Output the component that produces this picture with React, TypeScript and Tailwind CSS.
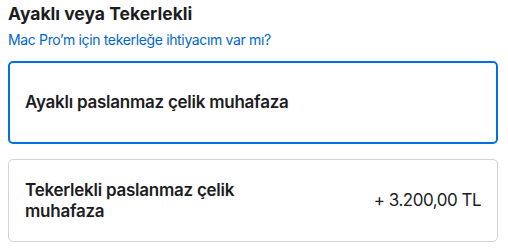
const options = [
  { id: 'feet', name: 'Ayaklı paslanmaz çelik muhafaza', price: '', selected: true },
  { id: 'wheels', name: 'Tekerlekli paslanmaz çelik muhafaza', price: '+ 3.200,00 TL', selected: false },
]

const App = () => {
  return (
    <div className="bg-white px-2 pt-[3px] text-[#1d1d1f] font-['Inter',sans-serif]">
      <h2 className="text-[17.5px] font-bold leading-[21px]">Ayaklı veya Tekerlekli</h2>
      <a href="#" className="mt-[7px] block text-[14px] leading-[18px] tracking-[-0.35px] text-[#0066cc]">
        Mac Pro’m için tekerleğe ihtiyacım var mı?
      </a>
      <div className="mt-[12px] w-[490px] space-y-[15px]">
        {options.map((o) => (
          <div
            key={o.id}
            className={
              o.selected
                ? 'flex h-[83px] items-center justify-between rounded-[5px] border-2 border-[#0071e3] px-[15px]'
                : 'flex h-[83px] items-center justify-between rounded-[5px] border border-[#d2d2d7] px-4'
            }
          >
            <span className="max-w-[285px] text-[17px] font-semibold leading-[21px] tracking-[-0.25px]">{o.name}</span>
            {o.price && <span className="text-[17px] leading-[21px] tracking-[-0.5px]">{o.price}</span>}
          </div>
        ))}
      </div>
    </div>
  )
}

export default App
